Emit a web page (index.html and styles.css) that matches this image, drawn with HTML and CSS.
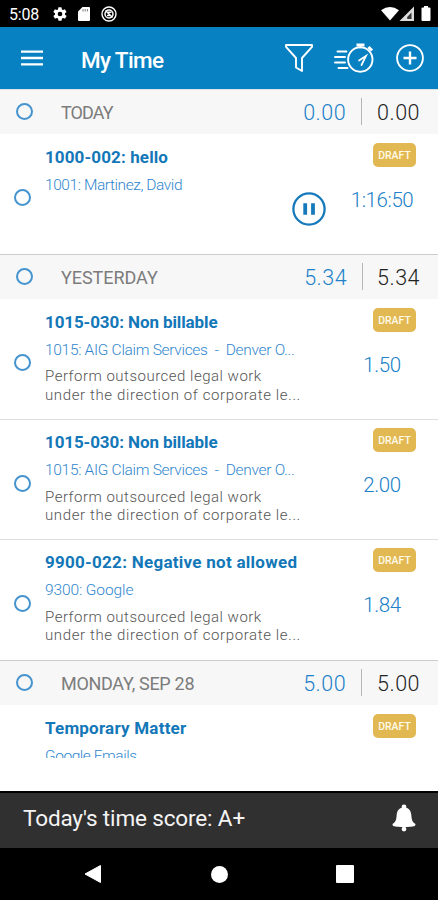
FILE: index.html
```html
<!DOCTYPE html>
<html lang="en">
<head>
<meta charset="utf-8">
<title>My Time</title>
<link rel="stylesheet" href="styles.css">
</head>
<body>
<div class="status">
  <span class="clock">5:08</span>
  <svg class="s-gear" width="16" height="16" viewBox="0 0 24 24"><path fill="#fff" fill-rule="evenodd" d="M19.4 13c.1-.3.1-.7.1-1s0-.7-.1-1l2.100-1.600c.2-.1.300-.4.100-.6l-2-3.500c-.1-.2-.4-.3-.6-.2l-2.500 1a7.300 7.300 0 0 0-1.700-1l-.4-2.600a.5.5 0 0 0-.5-.5h-4a.5.5 0 0 0-.5.500l-.4 2.600a7.700 7.700 0 0 0-1.700 1l-2.500-1c-.2-.1-.5 0-.6.2l-2 3.500c-.1.2-.1.500.1.600L4.500 11a8 8 0 0 0 0 2l-2.100 1.600c-.2.200-.2.400-.1.600l2 3.500c.1.200.4.300.6.200l2.500-1c.5.400 1.100.7 1.700 1l.4 2.600c0 .3.200.5.500.5h4c.3 0 .5-.2.500-.5l.4-2.600a7.300 7.300 0 0 0 1.700-1l2.500 1c.2.100.5 0 .6-.2l2-3.500c.1-.2.100-.5-.1-.6zM12 15.500a3.500 3.500 0 1 1 0-7 3.500 3.500 0 0 1 0 7z"/></svg>
  <svg class="s-card" width="12" height="14" viewBox="0 0 12 14"><path fill="#fff" d="M4.500 0H11a1 1 0 0 1 1 1v12a1 1 0 0 1-1 1H1a1 1 0 0 1-1-1V4.500z"/><path stroke="#000" stroke-width="1" opacity=".5" d="M5 2v2.500M7.200 2v2.500M9.400 2v2.500"/></svg>
  <svg class="s-sync" width="16" height="16" viewBox="0 0 16 16" fill="none" stroke="#fff"><circle cx="8" cy="8" r="7" stroke-width="1.400"/><circle cx="8" cy="8" r="4" stroke-width="1.500"/><path stroke-width="1.500" d="M4.500 4.500l7 7M7 6.200h3.500M6 9.500h3"/></svg>
  <span class="grow"></span>
  <svg width="51" height="16" viewBox="0 0 51 16"><path fill="#fff" d="M0 4.300Q9 -2.500 18 4.300L9 14.500z"/><path fill="#ddd" d="M33 .5V15H18.500z"/><path fill="#000" d="M30.500 6.500v6.500h-4.300v-2z" opacity=".75"/><path fill="#fff" d="M43 1.500V0h4v1.500h1.500a1 1 0 0 1 1 1V14a1 1 0 0 1-1 1h-7a1 1 0 0 1-1-1V2.500a1 1 0 0 1 1-1z"/></svg>
</div>
<header class="bar">
  <svg class="menu" width="22" height="16" viewBox="0 0 22 16"><path stroke="#fff" stroke-width="2.300" d="M0 1.600h22M0 8h22M0 14.400h22"/></svg>
  <h1>My Time</h1>
  <svg class="funnel" width="28" height="30" viewBox="0 0 28 30" fill="none" stroke="#fff" stroke-width="1.900" stroke-linejoin="round"><path d="M1 2h26v1.800L17 15v13L11 24.500V15L1 3.800z"/></svg>
  <svg class="watch" width="40" height="30" viewBox="0 0 40 30" fill="none" stroke="#fff" stroke-width="1.900" stroke-linecap="round"><circle cx="26.300" cy="16.500" r="12.200"/><path d="M3.500 8.500h9M1 14h10M1 19.500h10M4.500 25h9"/><path stroke-width="3" stroke-linecap="butt" d="M22.500 2h8M34.500 4l3.500 3.500"/><path stroke-width="1.700" d="M26.300 2v2.500M25 17.500l7-4.500-4.500 9"/></svg>
  <svg class="plus" width="28" height="28" viewBox="0 0 28 28" fill="none" stroke="#fff"><circle cx="14" cy="14" r="12.900" stroke-width="1.900"/><path stroke-width="2.400" d="M14 7.500v13M7.500 14h13"/></svg>
</header>
<main class="list">
  <section class="day first"><i class="ring"></i><h2 class="d1">TODAY</h2><span class="sum">0.00</span><span class="sum total">0.00</span></section>
  <article class="entry"><i class="ring"></i>
    <div class="info"><h3 class="t1">1000-002: hello</h3><p class="client c1">1001: Martinez, David</p></div>
    <svg class="pause" width="34" height="34" viewBox="0 0 34 34" fill="none" stroke="#1579bb"><circle cx="17" cy="17" r="15.600" stroke-width="2.300"/><path stroke-width="3.800" d="M13.200 11.300v11.500M21 11.300v11.500"/></svg>
    <div class="side"><b class="draft">DRAFT</b><span class="time timer">1:16:50</span></div>
  </article>
  <section class="day"><i class="ring"></i><h2 class="d2">YESTERDAY</h2><span class="sum">5.34</span><span class="sum total narrow">5.34</span></section>
  <article class="entry"><i class="ring"></i>
    <div class="info"><h3 class="t2">1015-030: Non billable</h3><p class="client c2">1015: AIG Claim Services&nbsp; -&nbsp; Denver O...</p><p class="note">Perform outsourced legal work<br><span>under the direction of corporate le...</span></p></div>
    <div class="side"><b class="draft">DRAFT</b><span class="time">1.50</span></div>
  </article>
  <article class="entry"><i class="ring"></i>
    <div class="info"><h3 class="t2">1015-030: Non billable</h3><p class="client c2">1015: AIG Claim Services&nbsp; -&nbsp; Denver O...</p><p class="note">Perform outsourced legal work<br><span>under the direction of corporate le...</span></p></div>
    <div class="side"><b class="draft">DRAFT</b><span class="time">2.00</span></div>
  </article>
  <article class="entry"><i class="ring"></i>
    <div class="info"><h3 class="t3">9900-022: Negative not allowed</h3><p class="client c3">9300: Google</p><p class="note">Perform outsourced legal work<br><span>under the direction of corporate le...</span></p></div>
    <div class="side"><b class="draft">DRAFT</b><span class="time">1.84</span></div>
  </article>
  <section class="day"><i class="ring"></i><h2 class="d3">MONDAY, SEP 28</h2><span class="sum">5.00</span><span class="sum total">5.00</span></section>
  <article class="entry cut">
    <div class="info"><h3 class="t4">Temporary Matter</h3><p class="client c4">Google Emails</p></div>
    <div class="side"><b class="draft">DRAFT</b></div>
  </article>
</main>
<footer class="score"><span>Today's time score: A+</span>
  <svg width="24" height="28" viewBox="0 0 24 29"><circle cx="12" cy="3" r="2.500" fill="#fff"/><circle cx="12" cy="26" r="2.500" fill="#fff"/><path fill="#fff" d="M12 3.500c5 0 7.300 3.500 7.600 8 .3 5 1.200 7.200 3.700 8.800.9.700.7 2-.3 2.400C19 24.300 5 24.300 1 22.700c-1-.4-1.200-1.700-.3-2.400 2.500-1.600 3.400-3.800 3.700-8.800.3-4.500 2.600-8 7.600-8z"/></svg>
</footer>
<nav class="keys">
  <svg width="18" height="20" viewBox="0 0 18 20"><path fill="#fff" d="M16.500 1.500v17L1 10z" stroke="#fff" stroke-linejoin="round"/></svg>
  <i class="home"></i><i class="recent"></i>
</nav>
</body>
</html>
```
FILE: styles.css
```css
* { box-sizing: border-box; margin: 0; padding: 0; }
body { width: 438px; height: 900px; overflow: hidden; display: flex; flex-direction: column; background: #fff; font-family: Roboto, "Liberation Sans", sans-serif; white-space: nowrap; }
svg { display: block; flex: none; }
.status { height: 27px; flex: none; background: #000; color: #fff; display: flex; align-items: center; padding: 1px 6px 0 9px; }
.clock { width: 43px; font-size: 16px; letter-spacing: -0.2px; }
.s-card { margin-left: 10px; }
.s-sync { margin-left: 11px; }
.grow { flex: 1; }
.bar { height: 62px; flex: none; background: #0781c1; display: flex; align-items: center; padding: 0 14px 0 21px; }
.bar h1 { margin-left: 38px; flex: 1; color: #fff; font-size: 22.500px; line-height: 28px; font-weight: 500; padding-top: 3px; letter-spacing: -.65px; }
.watch { margin-left: 21px; }
.plus { margin-left: 22px; }
.list { height: 669px; flex: none; overflow: hidden; border-top: 1px solid #dfe3e6; }
.day { height: 45px; display: flex; align-items: center; background: #f7f7f7; border-top: 1px solid #ccc; padding: 0 18px 2px 16px; }
.day.first { border-top: 0; height: 44px; }
.ring { width: 17px; height: 17px; flex: none; border: 2px solid #4594cf; border-radius: 50%; }
.day h2 { margin-left: 28px; flex: 1; font-size: 18px; font-weight: 400; color: #7c7c7c; padding-top: 3px; }
.day .d1 { letter-spacing: -.9px; }
.day .d2 { letter-spacing: -.05px; }
.day .d3 { letter-spacing: -.3px; }
.sum { font-size: 21.500px; font-weight: 300; color: #2080c8; letter-spacing: .5px; padding-top: 3px; }
.total { color: #222; border-left: 1px solid #b5b5b5; margin-left: 15px; padding: 1px 0 0 15px; height: 27px; line-height: 27px; }
.total.narrow { margin-left: 15px; padding-left: 14px; }
.entry { height: 120.300px; display: flex; background: #fff; padding: 0 22px 0 13px; }
.entry:has(+ .entry) { border-bottom: 1px solid #dedede; }
.entry > .ring { margin: 55px 14px 0 1px; }
.info { flex: 1; padding-top: 11.500px; }
.info h3 { font-size: 17px; line-height: 22px; font-weight: 700; color: #1377b8; }
.t1 { letter-spacing: .12px; }
.info .t2 { letter-spacing: -.1px; }
.info .t3 { letter-spacing: .27px; }
.info .t4 { letter-spacing: .22px; }
.client { font-size: 15.500px; line-height: 20px; margin-top: 7px; font-weight: 300; color: #2f86ce; }
.c1 { letter-spacing: -.42px; }
.c2 { letter-spacing: -.3px; }
.c3 { letter-spacing: -.1px; }
.c4 { letter-spacing: -.45px; }
.note { font-size: 15px; line-height: 18.500px; margin-top: 7.500px; font-weight: 300; color: #555; letter-spacing: .5px; }
.note span { letter-spacing: .62px; }
.side { width: 65px; flex: none; display: flex; flex-direction: column; align-items: center; }
.draft { width: 43px; height: 24px; flex: none; margin: 8.500px 0 0 22px; border-radius: 5px; background: #e2b852; color: #fffbe8; font-size: 10.500px; line-height: 25px; text-align: center; font-weight: 500; }
.time { margin: 20px 3px 0 0; font-size: 20.500px; line-height: 26px; font-weight: 300; color: #2080c8; letter-spacing: -.4px; }
.pause { margin: 58px 25px 0 0; }
.cut { height: 53px; overflow: hidden; padding-left: 45px; }
.score { margin-top: 33px; height: 57px; flex: none; background: #303030; border-top: 2px solid #000; color: #f4f4f4; display: flex; justify-content: space-between; align-items: center; padding: 0 22px 6px 23px; font-size: 22.500px; letter-spacing: -.14px; }
.keys { flex: 1; background: #000; display: flex; align-items: center; padding: 0 84px; justify-content: space-between; }
.home { width: 17px; height: 17px; border-radius: 50%; background: #fff; }
.recent { width: 18px; height: 18px; border-radius: 1px; background: #fff; }
```
